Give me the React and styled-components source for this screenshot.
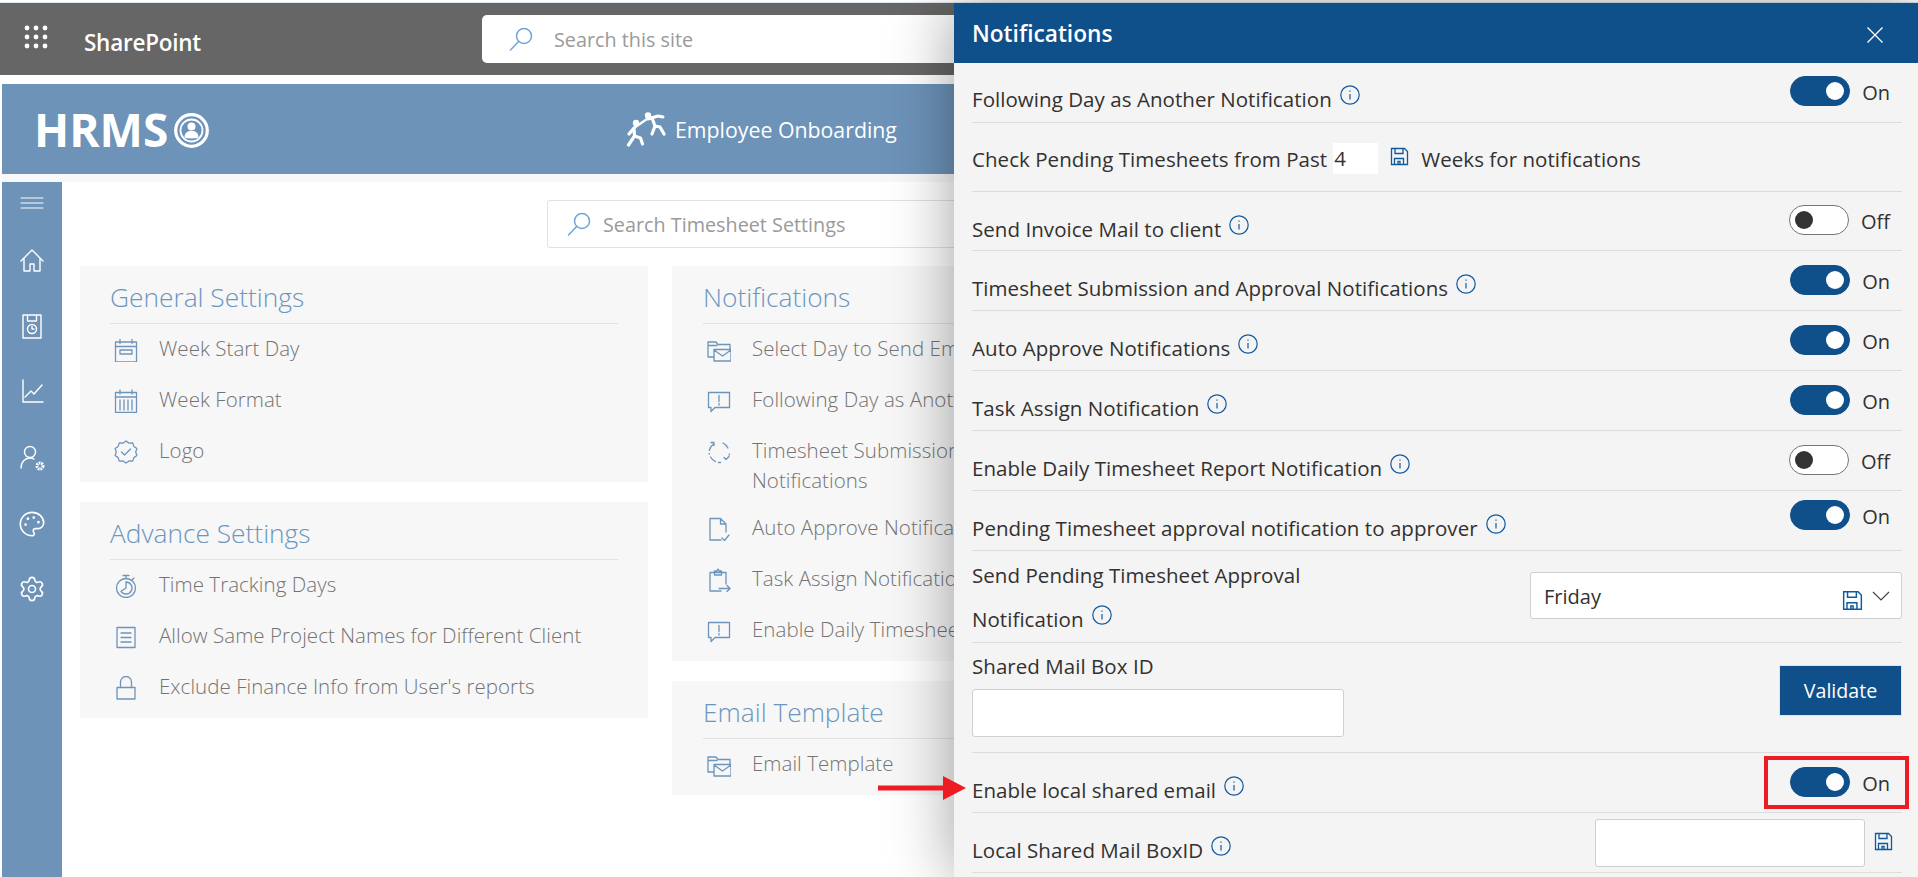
import React from "react";
import styled, { createGlobalStyle } from "styled-components";
import { Palette, Settings } from "lucide-react";

const Global = createGlobalStyle`
  html, body { margin: 0; padding: 0; background: #fff; }
  body { font-family: "Open Sans", "Noto Sans", sans-serif; }
  * { box-sizing: border-box; }
`;

const Page = styled.div`
  position: relative;
  height: 877px;
  overflow: hidden;
  background: #fff;
`;

const TopLine = styled.div`
  height: 3px;
  background: #fff;
  border-bottom: 1px solid #dfe7ee;
`;

const SuiteBar = styled.div`
  display: flex;
  height: 72px;
  padding: 12px 0 12px 24px;
  background: #666;
`;

const Waffle = styled.svg`
  width: 24px;
  height: 24px;
  margin: 10px 36px 0 0;
  fill: #fff;
`;

const Brand = styled.div`
  width: 398px;
  color: #fff;
  font-size: 22.500px;
  font-weight: 600;
  line-height: 56px;
  letter-spacing: -0.25px;
`;

const SiteSearch = styled.div`
  display: flex;
  align-items: center;
  flex: 1;
  gap: 21px;
  padding-left: 27px;
  background: #fff;
  border-radius: 5px;
  color: #9a9a9a;
  font-size: 19.800px;
`;

const SearchIcon = styled.svg`
  width: 24px;
  height: 24px;
  fill: none;
  stroke: #6ea5d8;
  stroke-width: 1.5;
  stroke-linecap: round;
  flex: none;
`;

const Banner = styled.div`
  display: flex;
  align-items: center;
  height: 90px;
  margin: 9px 0 0 2px;
  padding-left: 32px;
  background: #6d93b9;
  color: #fff;
`;

const Logo = styled.div`
  display: flex;
  align-items: center;
  gap: 6px;
  width: 592px;
  font-size: 46px;
  font-weight: 700;
  line-height: 1;
`;

const LogoMark = styled.svg`
  width: 35px;
  height: 35px;
  margin-top: 3px;
`;

const OnboardLink = styled.div`
  display: flex;
  align-items: center;
  gap: 9px;
  font-size: 21.300px;
`;

const RunnerIcon = styled.svg`
  width: 40px;
  height: 35px;
  fill: none;
  stroke: #fff;
  stroke-width: 3;
  stroke-linecap: round;
  stroke-linejoin: round;
`;

const Body = styled.div`
  display: flex;
  height: 703px;
  padding-top: 8px;
  margin-left: 2px;
  background: linear-gradient(#f8f8f8 8px, #fff 8px);
`;

const SideNav = styled.nav`
  display: flex;
  flex-direction: column;
  align-items: center;
  gap: 37px;
  flex: none;
  width: 60px;
  padding-top: 7px;
  background: #6d93b9;
`;

const NavIcon = styled.svg`
  flex: none;
  width: 28px;
  height: 28px;
  margin-bottom: ${(p) => p.$pull || 0}px;
  fill: none;
  stroke: #fff;
  stroke-width: 1.4;
  stroke-linecap: round;
  stroke-linejoin: round;
`;

const Main = styled.main`
  flex: 1;
  padding: 18px 0 0 18px;
`;

const SettingsSearch = styled.div`
  display: flex;
  align-items: center;
  gap: 12px;
  width: 800px;
  height: 48px;
  margin: 0 0 18px 467px;
  padding-left: 19px;
  border: 1px solid #e1e1e1;
  border-radius: 3px;
  color: #9a9a9a;
  font-size: 19.800px;
`;

const Columns = styled.div`
  display: grid;
  grid-template-columns: 568px 568px;
  gap: 24px;
`;

const Column = styled.div`
  display: flex;
  flex-direction: column;
  gap: 20px;
`;

const Card = styled.section`
  padding: 0 30px 5px ${(p) => p.$inset || 30}px;
  background: #f7f7f7;
`;

const CardTitle = styled.h2`
  height: 58px;
  margin: 0;
  border-bottom: 1px solid #e2e2e2;
  color: #6b96bd;
  font-size: 26.300px;
  font-weight: 300;
  line-height: 63px;
  white-space: nowrap;
`;

const Item = styled.div`
  display: flex;
  align-items: flex-start;
  padding: 9px 0 ${(p) => (p.$wrap ? 8 : 12)}px 4px;
  color: #737373;
  font-size: 20.500px;
  font-weight: 300;
  line-height: 30px;
  letter-spacing: 0.05px;
`;

const ItemIcon = styled.svg`
  flex: none;
  width: 24px;
  height: 24px;
  margin: 5px 21px 0 0;
  fill: none;
  stroke: #6d95bb;
  stroke-width: 1.3;
  stroke-linejoin: round;
  stroke-linecap: round;
`;

const ItemText = styled.span`
  white-space: nowrap;
`;

const Panel = styled.aside`
  position: absolute;
  top: 3px;
  right: 0;
  bottom: 0;
  width: 964px;
  background: #f4f4f4;
  color: #323130;
  box-shadow: 0 0 60px rgba(0, 0, 0, 0.38);
`;

const PanelHeader = styled.header`
  display: flex;
  align-items: center;
  justify-content: space-between;
  height: 60px;
  padding: 0 34px 0 18px;
  background: #0f4f8a;
  color: #fff;
  font-size: 22.700px;
  font-weight: 600;
`;

const CloseIcon = styled.svg`
  width: 18px;
  height: 18px;
  margin-top: 4px;
  stroke: #fff;
  stroke-width: 1.4;
`;

const Row = styled.div`
  position: relative;
  display: flex;
  align-items: flex-start;
  justify-content: space-between;
  height: ${(p) => p.$h || 60}px;
  margin: 0 16px 0 18px;
  border-bottom: 1px solid #dcdcdc;
`;

const Label = styled.div`
  margin-left: ${(p) => p.$gap || 0}px;
  padding-top: ${(p) => (p.$top === undefined ? 22 : p.$top)}px;
  font-size: 20.500px;
  font-weight: 500;
  line-height: ${(p) => p.$lh || 30}px;
  letter-spacing: 0.05px;
  white-space: nowrap;
`;

const InfoIcon = styled.svg`
  width: 20px;
  height: 20px;
  margin-left: 8px;
  vertical-align: 2px;
  fill: none;
  stroke: #0f5a9e;
  stroke-width: 1.2;
`;

const ToggleGroup = styled.div`
  display: flex;
  align-items: flex-start;
  gap: 12px;
  margin: ${(p) => p.$top || 13}px 12px 0 0;
  font-size: 20px;
  line-height: 30px;
`;

const StateText = styled.span`
  padding-top: 2px;
`;

const Toggle = styled.div`
  display: flex;
  align-items: center;
  justify-content: ${(p) => (p.$on ? "flex-end" : "flex-start")};
  width: 60px;
  height: 30px;
  padding: 0 5px;
  border-radius: 15px;
  background: ${(p) => (p.$on ? "#0f4f8a" : "#fff")};
  border: 1px solid ${(p) => (p.$on ? "#0f4f8a" : "#767676")};
`;

const Knob = styled.span`
  width: 18px;
  height: 18px;
  border-radius: 50%;
  background: ${(p) => (p.$on ? "#fff" : "#333")};
`;

const WeeksRow = styled.div`
  display: flex;
  align-items: flex-start;
`;

const WeeksInput = styled.div`
  width: 45px;
  height: 31px;
  margin: 20px 12px 0 6px;
  padding-left: 1px;
  background: #fff;
  font-size: 20.500px;
  line-height: 31px;
`;

const SaveIcon = styled.svg`
  flex: none;
  width: ${(p) => p.$size || 19}px;
  height: ${(p) => p.$size || 19}px;
  margin-top: ${(p) => p.$top || 0}px;
  fill: none;
  stroke: #0f5a9e;
  stroke-width: 1.3;
`;

const Select = styled.div`
  display: flex;
  align-items: flex-start;
  width: 372px;
  height: 47px;
  margin-top: 21px;
  padding: 0 11px 0 13px;
  background: #fff;
  border: 1px solid #cfcfcf;
  border-radius: 3px;
  font-size: 20px;
  line-height: 47px;
`;

const SelectValue = styled.span`
  flex: 1;
  font-weight: 400;
`;

const Chevron = styled.svg`
  width: 18px;
  height: 10px;
  margin: 18px 0 0 9px;
  fill: none;
  stroke: #444;
  stroke-width: 1.2;
`;

const TextField = styled.div`
  width: ${(p) => p.$w}px;
  height: 48px;
  margin-top: ${(p) => p.$top}px;
  background: #fff;
  border: 1px solid #cfcfcf;
  border-radius: 3px;
`;

const ValidateButton = styled.button`
  width: 123px;
  height: 51px;
  margin-top: 22px;
  border: 1px solid #e4e4e4;
  background: #0f4f8a;
  color: #fff;
  font-family: inherit;
  font-size: 19.600px;
  font-weight: 500;
`;

const LocalField = styled.div`
  display: flex;
  align-items: flex-start;
  gap: 9px;
  padding-right: 9px;
`;

const Highlight = styled.div`
  position: absolute;
  top: 3px;
  right: -7px;
  width: 145px;
  height: 53px;
  border: 4px solid #ed1c24;
`;

const Arrow = styled.svg`
  position: absolute;
  left: 878px;
  top: 775px;
  width: 88px;
  height: 26px;
  fill: #ed1c24;
`;

const searchGlyph = (
  <>
    <circle cx="15" cy="9" r="7.5" />
    <path d="M9.6 14.4 1.5 23" />
  </>
);

const saveGlyph = (
  <>
    <path d="M1.5 1.5h13l3 3v13h-16z" />
    <path d="M5 1.5v5h8v-5M4.5 17.5v-6h9v6M8 17.5v-3h2v3" />
  </>
);

const itemGlyphs = {
  weekStart: <path d="M1.5 4h21v20h-21zM1.5 8.5h21M6 1.5v4M18 1.5v4M6 12h12v4H6z" />,
  weekFormat: <path d="M1.5 3.5h21v20h-21zM1.5 8h21M6 1v4M18 1v4M6 11v10M10 11v10M14 11v10M18 11v10" />,
  logo: (
    <>
      <path d="M12 1l3 2.200 3.700-.3 1.200 3.500 3 2.200-1.200 3.400 1.200 3.500-3 2.100-1.200 3.500-3.700-.1L12 23l-3-2-3.700.1-1.200-3.500-3-2.100 1.200-3.500-1.200-3.400 3-2.200 1.200-3.500 3.700.3z" />
      <path d="M7.500 12l3 3 6-6" />
    </>
  ),
  timer: (
    <>
      <circle cx="12" cy="14" r="9.500" />
      <path d="M12 14V8a6 6 0 1 1-5 9.300zM9 1.500h6M12 1.500v3M20 4l-2 2" />
    </>
  ),
  page: <path d="M3 2.500h18v20H3zM7 8h10M7 12.500h10M7 17h10" />,
  lock: <path d="M3 11.500h18V23H3zM6.500 11.500V6a5.500 5.500 0 0 1 11 0v5.500" />,
  mail: (
    <>
      <path d="M1 19V4h8l2 2.500h12V11M1 7.500h9M1 19h6" />
      <path d="M7 11.500h17V23H7zM7 12l8.500 6L24 12" />
    </>
  ),
  alert: <path d="M1.500 3.500h21v15H8l-4 4v-4H1.500zM12 6.500v6M12 14.500v1.500" />,
  cycle: (
    <path
      d="M6 4.500a10 10 0 0 0-3.800 9.500M3.500 17a10 10 0 0 0 5 4.500M11.500 22.500h2M16 3a10 10 0 0 1 5.500 7M22.500 14l-.5 1M4 2.500l3 0v3M22 16.500l-3 3-2-2"
      strokeDasharray="7 3"
    />
  ),
  approve: <path d="M19 15V7l-5.500-5.500H3V23h11M13.500 1.500V7H19M15 21l2.500 2.500L22 18" />,
  task: <path d="M3 4.500h16V16M3 4.500V23h11M7.500 7V3h2.500l1-2 1 2h2.500v4zM12 20.500h11M20 17.500l3 3-3 3" />,
};

const Info = () => (
  <InfoIcon viewBox="0 0 20 20">
    <circle cx="10" cy="10" r="9.200" />
    <path d="M10 9v5.500M10 5.500v1.300" />
  </InfoIcon>
);

const SettingItem = ({ icon, wrap, children }) => (
  <Item $wrap={wrap}>
    <ItemIcon viewBox="0 0 24 24">{itemGlyphs[icon]}</ItemIcon>
    <ItemText>{children}</ItemText>
  </Item>
);

const Switch = ({ on, top }) => (
  <ToggleGroup $top={top}>
    <Toggle $on={on}>
      <Knob $on={on} />
    </Toggle>
    <StateText>{on ? "On" : "Off"}</StateText>
  </ToggleGroup>
);

const ToggleRow = ({ label, on = true, top, labelTop }) => (
  <Row>
    <Label $top={labelTop}>
      {label}
      <Info />
    </Label>
    <Switch on={on} top={top} />
  </Row>
);

const Save = ({ size, top }) => (
  <SaveIcon viewBox="0 0 19 19" $size={size} $top={top}>
    {saveGlyph}
  </SaveIcon>
);

export default function App() {
  return (
    <Page>
      <Global />
      <TopLine />
      <SuiteBar>
        <Waffle viewBox="0 0 24 24">
          {[3, 12, 21].map((y) =>
            [3, 12, 21].map((x) => <circle key={`${x}-${y}`} cx={x} cy={y} r="2.400" />)
          )}
        </Waffle>
        <Brand>SharePoint</Brand>
        <SiteSearch>
          <SearchIcon viewBox="0 0 24 24">{searchGlyph}</SearchIcon>
          Search this site
        </SiteSearch>
      </SuiteBar>
      <Banner>
        <Logo>
          HRMS
          <LogoMark viewBox="0 0 35 35">
            <circle cx="17.500" cy="17.500" r="15.800" fill="none" stroke="#fff" strokeWidth="3.200" />
            <circle cx="17.500" cy="17.500" r="11" fill="none" stroke="#fff" strokeWidth="1.800" />
            <circle cx="17.500" cy="13.500" r="4" fill="#fff" />
            <path d="M10.500 24.500c0-5 3-6.500 7-6.500s7 1.500 7 6.500c-2 1.200-12 1.200-14 0z" fill="#fff" />
          </LogoMark>
        </Logo>
        <OnboardLink>
          <RunnerIcon viewBox="0 0 40 35">
            <circle cx="10" cy="11" r="3.200" fill="#fff" stroke="none" />
            <circle cx="22" cy="3.500" r="3.200" fill="#fff" stroke="none" />
            <path d="M8 16 21 7" strokeWidth="2.200" />
            <path d="M3 22l5-6 .5 8-6 9M8.500 24l6 2 2 6" strokeWidth="3.200" />
            <path d="M26 6l3 8-3 8M29 14l5 1 4 7" strokeWidth="3.200" />
            <path d="M22 7l5-1.500 5-1.500 5 1" strokeWidth="3" />
          </RunnerIcon>
          Employee Onboarding
        </OnboardLink>
      </Banner>
      <Body>
        <SideNav>
          <NavIcon viewBox="0 0 28 28" $pull={-7}>
            <path d="M3 9h22M3 14h22M3 19h22" strokeWidth="1" />
          </NavIcon>
          <NavIcon viewBox="0 0 28 28">
            <path d="M3 14 14 3l11 11M6 12v12h6v-7h4v7h6V12" />
          </NavIcon>
          <NavIcon viewBox="0 0 28 28">
            <path d="M5 3h18v23H5zM9.500 3v6h9V3" />
            <circle cx="14" cy="17" r="4.500" />
            <path d="M14 14.500V17h2" />
          </NavIcon>
          <NavIcon viewBox="0 0 28 28" $pull={2}>
            <path d="M5 3v22h20M7 20l6-6 3 3 8-9" />
          </NavIcon>
          <NavIcon viewBox="0 0 28 28" $pull={1}>
            <circle cx="12" cy="8" r="5.500" />
            <path d="M3 24c0-6 4-10 9-10 1.500 0 3 .3 4 1" />
            <circle cx="22" cy="22" r="3" strokeWidth="3" strokeDasharray="1.700 .8" strokeLinecap="butt" />
          </NavIcon>
          <Palette size={28} color="#fff" strokeWidth={1.4} />
          <Settings size={28} color="#fff" strokeWidth={1.4} />
        </SideNav>
        <Main>
          <SettingsSearch>
            <SearchIcon viewBox="0 0 24 24">{searchGlyph}</SearchIcon>
            Search Timesheet Settings
          </SettingsSearch>
          <Columns>
            <Column>
              <Card>
                <CardTitle>General Settings</CardTitle>
                <SettingItem icon="weekStart">Week Start Day</SettingItem>
                <SettingItem icon="weekFormat">Week Format</SettingItem>
                <SettingItem icon="logo">Logo</SettingItem>
              </Card>
              <Card>
                <CardTitle>Advance Settings</CardTitle>
                <SettingItem icon="timer">Time Tracking Days</SettingItem>
                <SettingItem icon="page">Allow Same Project Names for Different Client</SettingItem>
                <SettingItem icon="lock">Exclude Finance Info from User's reports</SettingItem>
              </Card>
            </Column>
            <Column>
              <Card $inset={31}>
                <CardTitle>Notifications</CardTitle>
                <SettingItem icon="mail">Select Day to Send Email Notifications</SettingItem>
                <SettingItem icon="alert">Following Day as Another Notification</SettingItem>
                <SettingItem icon="cycle" wrap>
                  Timesheet Submission and Approval
                  <br />
                  Notifications
                </SettingItem>
                <SettingItem icon="approve">Auto Approve Notifications</SettingItem>
                <SettingItem icon="task">Task Assign Notification</SettingItem>
                <SettingItem icon="alert">Enable Daily Timesheet Report Notification</SettingItem>
              </Card>
              <Card $inset={31}>
                <CardTitle>Email Template</CardTitle>
                <SettingItem icon="mail">Email Template</SettingItem>
              </Card>
            </Column>
          </Columns>
        </Main>
      </Body>

      <Panel>
        <PanelHeader>
          Notifications
          <CloseIcon viewBox="0 0 18 18">
            <path d="M1.500 1.500l15 15M16.500 1.500l-15 15" />
          </CloseIcon>
        </PanelHeader>
        <ToggleRow label="Following Day as Another Notification" labelTop={21} />
        <Row $h={69}>
          <WeeksRow>
            <Label $top={21}>Check Pending Timesheets from Past</Label>
            <WeeksInput>4</WeeksInput>
            <Save top={24} />
            <Label $top={21} $gap={12}>
              Weeks for notifications
            </Label>
          </WeeksRow>
        </Row>
        <Row $h={59}>
          <Label>
            Send Invoice Mail to client
            <Info />
          </Label>
          <Switch on={false} />
        </Row>
        <ToggleRow label="Timesheet Submission and Approval Notifications" top={14} />
        <ToggleRow label="Auto Approve Notifications" top={14} />
        <ToggleRow label="Task Assign Notification" top={14} />
        <ToggleRow label="Enable Daily Timesheet Report Notification" on={false} top={14} />
        <ToggleRow label="Pending Timesheet approval notification to approver" top={9} />
        <Row $h={92}>
          <Label $top={2} $lh={44}>
            Send Pending Timesheet Approval
            <br />
            Notification
            <Info />
          </Label>
          <Select>
            <SelectValue>Friday</SelectValue>
            <Save size={21} top={17} />
            <Chevron viewBox="0 0 18 10">
              <path d="M1 1l8 8 8-8" />
            </Chevron>
          </Select>
        </Row>
        <Row $h={110}>
          <div>
            <Label $top={8}>Shared Mail Box ID</Label>
            <TextField $w={372} $top={8} />
          </div>
          <ValidateButton>Validate</ValidateButton>
        </Row>
        <Row>
          <Label>
            Enable local shared email
            <Info />
          </Label>
          <Switch on top={14} />
          <Highlight />
        </Row>
        <Row>
          <Label>
            Local Shared Mail BoxID
            <Info />
          </Label>
          <LocalField>
            <TextField $w={270} $top={6} />
            <Save top={19} />
          </LocalField>
        </Row>
      </Panel>

      <Arrow viewBox="0 0 88 26">
        <path d="M0 10.500h65V1l23 12-23 12v-9.500H0z" />
      </Arrow>
    </Page>
  );
}
